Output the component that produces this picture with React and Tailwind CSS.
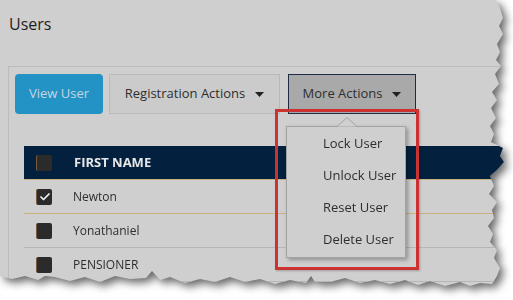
import { Check } from 'lucide-react';

// torn paper outline: right edge top to bottom, then bottom edge right to left
const EDGE = [
  [0, 0], [496, 0], [500, 8], [503, 18], [499, 26], [503, 34], [497, 44], [500, 52],
  [496, 60], [501, 66], [495, 74], [499, 84], [492, 92], [497, 100], [491, 108],
  [496, 118], [490, 126], [494, 134], [491, 142], [503, 148], [500, 156], [504, 162],
  [497, 170], [490, 176], [494, 186], [489, 194], [497, 202], [492, 210], [494, 218],
  [488, 226], [493, 234], [490, 242], [497, 250], [494, 258], [500, 268], [497, 276],
  [492, 284], [480, 283], [470, 286], [460, 282], [445, 286], [430, 281], [418, 285],
  [405, 280], [390, 284], [375, 280], [360, 283], [345, 278], [330, 282], [315, 282],
  [311, 276], [306, 283], [290, 280], [275, 284], [260, 279], [245, 282], [230, 277],
  [215, 282], [200, 279], [185, 283], [170, 277], [160, 280], [152, 271], [146, 278],
  [130, 279], [115, 276], [100, 282], [85, 277], [70, 281], [55, 277], [45, 276],
  [38, 280], [25, 276], [12, 279], [0, 276],
];

const clip = `polygon(${EDGE.map(([x, y]) => `${x}px ${y}px`).join(', ')})`;

const rows = [
  { name: 'Newton', checked: true, line: 'border-[#c9b27e]' },
  { name: 'Yonathaniel', checked: false, line: 'border-[#b6b6b6]' },
  { name: 'PENSIONER', checked: false, line: 'border-[#b6b6b6]' },
];

const menuItems = ['Lock User', 'Unlock User', 'Reset User', 'Delete User'];

function Caret() {
  return (
    <svg width="9" height="5" viewBox="0 0 9 5" className="ml-2.5">
      <path d="M0 0h9L4.5 5z" fill="#222" />
    </svg>
  );
}

function Box({ checked }) {
  return (
    <span className="flex w-4 h-4 items-center justify-center rounded-[2px] bg-[#2b2b2b] border-l border-[#7a5a3a]">
      {checked && <Check size={12} strokeWidth={3.5} color="#f2f2f2" />}
    </span>
  );
}

export default function App() {
  return (
    <div className="w-[513px] h-[300px] bg-white overflow-hidden font-['Open_Sans',sans-serif]">
      <div className="h-full [filter:drop-shadow(4px_4px_4px_rgba(0,0,0,0.6))]">
        <div className="relative h-full bg-[#cfcfcf]" style={{ clipPath: clip }}>
          <h1 className="pl-[9px] pt-[13px] h-[66px] text-[16px] leading-[22px] text-[#1e1e1e]">Users</h1>

          <div className="ml-2 border-t border-l border-[#bcbcbc] h-[234px]">
            <div className="flex items-start pl-[6px] pt-[7px]">
              <button className="w-[88px] h-10 rounded-[4px] bg-[#2392c4] text-[13px] text-[#c6d7e2]">
                View User
              </button>
              <button className="ml-[6px] w-[171px] h-10 flex items-center justify-center border border-[#b9b9b9] bg-[#cbcbcb] text-[13px] text-[#2e2e2e]">
                Registration Actions
                <Caret />
              </button>
              <button className="ml-2 w-[128px] h-10 flex items-center justify-center border border-[#1e2d45] bg-[#a9a9a9] text-[13px] text-[#2e2e2e]">
                More Actions
                <Caret />
              </button>
            </div>

            <div className="ml-[15px] mt-[32px]">
              <div className="h-[34px] flex items-center bg-[#03213f] border-b border-[#c9b27e]">
                <span className="ml-3">
                  <Box />
                </span>
                <span className="ml-[22px] text-[13px] font-bold text-[#e6e6e6]">FIRST NAME</span>
              </div>
              {rows.map((r) => (
                <div key={r.name} className={`h-[34px] flex items-center border-b ${r.line}`}>
                  <span className="ml-3">
                    <Box checked={r.checked} />
                  </span>
                  <span className="ml-[21px] text-[12px] text-[#2e2e2e]">{r.name}</span>
                </div>
              ))}
            </div>
          </div>

          {/* dropdown menu */}
          <div className="absolute left-[286px] top-[117px] w-[120px]">
            <svg width="20" height="10" viewBox="0 0 20 10" className="absolute left-[51px] top-0">
              <path d="M0 9.5L10 0.5L20 9.5" fill="#cfcfcf" stroke="#a3a3a3" />
            </svg>
            <ul className="mt-[9px] py-px bg-[#cfcfcf] border border-[#a3a3a3] shadow-[2px_2px_4px_rgba(0,0,0,0.3)]">
              {menuItems.map((m) => (
                <li key={m} className="h-8 flex items-center pl-9 text-[13px] text-[#2e2e2e]">
                  {m}
                </li>
              ))}
            </ul>
          </div>

          {/* highlight */}
          <div className="absolute left-[275px] top-[109px] w-[144px] h-[161px] border-[3px] border-[#cc3232] shadow-[1px_1px_2px_rgba(0,0,0,0.25)]" />
        </div>
      </div>
    </div>
  );
}
